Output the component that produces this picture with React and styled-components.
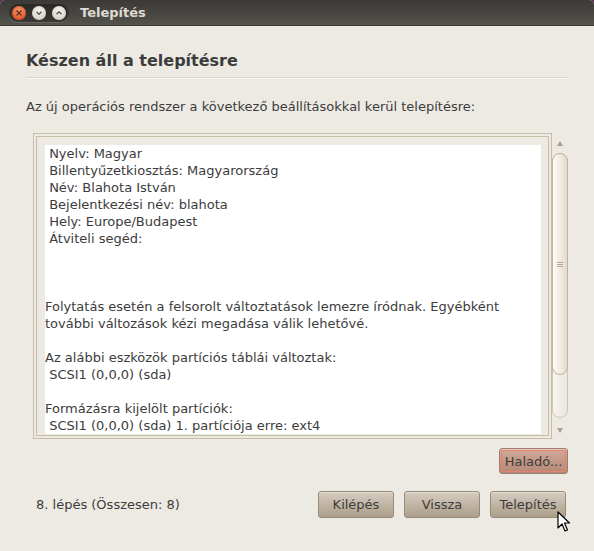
import React from "react";
import styled, { createGlobalStyle } from "styled-components";

const Global = createGlobalStyle`
  html, body { margin: 0; padding: 0; background: #5a2d4f; }
  body { font-family: "DejaVu Sans", "Liberation Sans", sans-serif; }
  * { box-sizing: border-box; }
`;

const Window = styled.div`
  width: 594px;
  height: 551px;
  display: flex;
  flex-direction: column;
  background: #edeae4;
  border-radius: 5px 5px 0 0;
  overflow: hidden;
  position: relative;
`;

const TitleBar = styled.div`
  height: 26px;
  flex: none;
  display: flex;
  align-items: center;
  background: linear-gradient(#3b3a36, #4c4a45 70%, #55534d);
  border-bottom: 1px solid #3a3935;
`;

const ButtonPill = styled.div`
  margin-left: 9px;
  width: 60px;
  height: 18px;
  margin-top: 1px;
  border-radius: 9px;
  background: linear-gradient(#2a2926, #3a3935);
  box-shadow: 0 1px 0 rgba(255,255,255,0.12);
  display: flex;
  align-items: center;
  justify-content: space-between;
  padding: 0 3px;
`;

const WinButton = styled.div`
  width: 14px;
  height: 14px;
  border-radius: 50%;
  display: flex;
  align-items: center;
  justify-content: center;
  background: ${(p) =>
    p.$close
      ? "radial-gradient(circle at 50% 35%, #f59b6c, #e0582a 70%, #c54a20)"
      : "radial-gradient(circle at 50% 35%, #f4f2ee, #d9d5cd 70%, #bdb8ae)"};
`;

const Title = styled.div`
  margin-left: 11px;
  font-size: 13px;
  font-weight: bold;
  color: #dfdbd2;
  line-height: 18px;
  margin-top: 1px;
`;

const Content = styled.div`
  flex: 1;
  display: flex;
  flex-direction: column;
  padding: 25px 26px 0 26px;
`;

const Heading = styled.div`
  font-size: 16px;
  font-weight: bold;
  line-height: 20px;
  color: #3c3c3c;
`;

const Separator = styled.div`
  margin-top: 6px;
  height: 2px;
  border-top: 1px solid #dcd5c9;
  border-bottom: 1px solid #f9f7f3;
`;

const Intro = styled.div`
  margin-top: 19px;
  font-size: 13px;
  line-height: 17px;
  color: #3c3c3c;
`;

const ScrollRow = styled.div`
  margin-top: 18px;
  margin-left: 7px;
  display: flex;
  align-items: stretch;
`;

const OuterFrame = styled.div`
  width: 519px;
  height: 306px;
  border: 1px solid #c8bda9;
  padding: 2px;
`;

const InnerFrame = styled.div`
  height: 100%;
  border: 1px solid #c8bda9;
  padding: 8px 7px 1px 8px;
`;

const TextArea = styled.div`
  height: 100%;
  background: #ffffff;
  overflow: hidden;
  font-size: 13px;
  line-height: 17px;
  color: #3c3c3c;
  white-space: pre;
`;

const ScrollBar = styled.div`
  width: 16px;
  margin-left: 0px;
  display: flex;
  flex-direction: column;
  align-items: center;
  padding-top: 8px;
`;

const Arrow = styled.div`
  width: 0;
  height: 0;
  border-left: 3px solid transparent;
  border-right: 3px solid transparent;
  ${(p) =>
    p.$down
      ? "border-top: 5px solid #a89d86;"
      : "border-bottom: 5px solid #a89d86;"}
`;

const Trough = styled.div`
  margin-top: 7px;
  width: 16px;
  height: 265px;
  border: 1px solid #cfc5b4;
  border-radius: 8px;
  background: linear-gradient(90deg, #f6f4f0, #ece7df);
  display: flex;
  flex-direction: column;
`;

const Thumb = styled.div`
  height: 222px;
  margin: -1px;
  border: 1px solid #bfb49f;
  border-radius: 8px;
  background: linear-gradient(90deg, #fdfcfa, #f1ede6 45%, #e2dacd);
  display: flex;
  align-items: center;
  justify-content: center;
`;

const Grip = styled.div`
  width: 6px;
  height: 5px;
  border-top: 1px solid #b5aa94;
  border-bottom: 1px solid #b5aa94;
  position: relative;
  &::after {
    content: "";
    position: absolute;
    left: 0;
    right: 0;
    top: 1px;
    border-top: 1px solid #b5aa94;
  }
`;

const DownWrap = styled.div`
  margin-top: 10px;
`;

const AdvancedRow = styled.div`
  margin-top: 9px;
  display: flex;
  justify-content: flex-end;
`;

const Button = styled.div`
  width: ${(p) => p.$w || 76}px;
  height: ${(p) => p.$h || 27}px;
  border: 1px solid ${(p) => (p.$accent ? "#9c7f70" : "#978a76")};
  border-radius: 3px;
  background: ${(p) =>
    p.$accent
      ? "linear-gradient(#d2ab9b, #c29886 50%, #b48877)"
      : "linear-gradient(#d6cdc0, #c1b5a4 50%, #ab9e8a)"};
  box-shadow: inset 0 1px 0 rgba(255,255,255,0.35);
  display: flex;
  align-items: center;
  justify-content: center;
  font-size: 13px;
  color: #3c3c3c;
  ${(p) => (p.$accent ? "outline: 1px solid #e9826c; outline-offset: -3px;" : "")}
`;

const BottomRow = styled.div`
  margin-top: 17px;
  display: flex;
  align-items: center;
  padding: 0 2px 0 10px;
`;

const StepLabel = styled.div`
  flex: 1;
  font-size: 13px;
  line-height: 17px;
  color: #3c3c3c;
`;

const ButtonGroup = styled.div`
  display: flex;
  gap: 10px;
`;

const Cursor = styled.svg`
  position: absolute;
  left: 557px;
  top: 511px;
`;

const text = ` Nyelv: Magyar
 Billentyűzetkiosztás: Magyarország
 Név: Blahota István
 Bejelentkezési név: blahota
 Hely: Europe/Budapest
 Átviteli segéd: 



Folytatás esetén a felsorolt változtatások lemezre íródnak. Egyébként
további változások kézi megadása válik lehetővé.

Az alábbi eszközök partíciós táblái változtak:
 SCSI1 (0,0,0) (sda)

Formázásra kijelölt partíciók:
 SCSI1 (0,0,0) (sda) 1. partíciója erre: ext4`;

export default function App() {
  return (
    <>
      <Global />
      <Window>
        <TitleBar>
          <ButtonPill>
            <WinButton $close>
              <svg width="8" height="8" viewBox="0 0 8 8">
                <path d="M1.5 1.5 L6.5 6.5 M6.5 1.5 L1.5 6.5" stroke="#6a2a14" strokeWidth="1.4" />
              </svg>
            </WinButton>
            <WinButton>
              <svg width="8" height="8" viewBox="0 0 8 8">
                <path d="M1.5 2.8 L4 5.3 L6.5 2.8" stroke="#5a5750" strokeWidth="1.4" fill="none" />
              </svg>
            </WinButton>
            <WinButton>
              <svg width="8" height="8" viewBox="0 0 8 8">
                <path d="M1.5 5.2 L4 2.7 L6.5 5.2" stroke="#5a5750" strokeWidth="1.4" fill="none" />
              </svg>
            </WinButton>
          </ButtonPill>
          <Title>Telepítés</Title>
        </TitleBar>
        <Content>
          <Heading>Készen áll a telepítésre</Heading>
          <Separator />
          <Intro>Az új operációs rendszer a következő beállításokkal kerül telepítésre:</Intro>
          <ScrollRow>
            <OuterFrame>
              <InnerFrame>
                <TextArea>{text}</TextArea>
              </InnerFrame>
            </OuterFrame>
            <ScrollBar>
              <Arrow />
              <Trough>
                <Thumb>
                  <Grip />
                </Thumb>
              </Trough>
              <DownWrap>
                <Arrow $down />
              </DownWrap>
            </ScrollBar>
          </ScrollRow>
          <AdvancedRow>
            <Button $accent $w={69} $h={26}>Haladó...</Button>
          </AdvancedRow>
          <BottomRow>
            <StepLabel>8. lépés (Összesen: 8)</StepLabel>
            <ButtonGroup>
              <Button>Kilépés</Button>
              <Button>Vissza</Button>
              <Button>Telepítés</Button>
            </ButtonGroup>
          </BottomRow>
        </Content>
        <Cursor width="14" height="22" viewBox="0 0 14 22">
          <path d="M1 1 L1 17 L5 13 L8 20 L10.5 19 L7.5 12 L12.5 12 Z" fill="#ffffff" stroke="#000000" strokeWidth="1.2" strokeLinejoin="round" />
        </Cursor>
      </Window>
    </>
  );
}
